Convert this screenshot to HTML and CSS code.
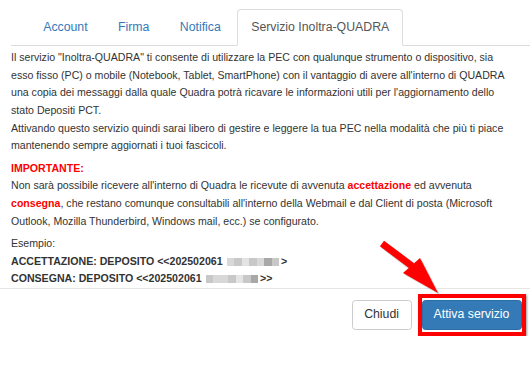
FILE: index.html
```html
<!DOCTYPE html>
<html lang="it">
<head>
<meta charset="UTF-8">
<title>Servizio Inoltra-QUADRA</title>
<link rel="stylesheet" href="styles.css">
</head>
<body>
  <ul class="tabs">
    <li><a href="#">Account</a></li>
    <li><a href="#">Firma</a></li>
    <li><a href="#">Notifica</a></li>
    <li class="active"><a href="#">Servizio Inoltra-QUADRA</a></li>
  </ul>

  <div class="tab-body">
    <p>Il servizio "Inoltra-QUADRA" ti consente di utilizzare la PEC con qualunque strumento o dispositivo, sia<br>
    esso fisso (PC) o mobile (Notebook, Tablet, SmartPhone) con il vantaggio di avere all'interno di QUADRA<br>
    una copia dei messaggi dalla quale Quadra potrà ricavare le informazioni utili per l'aggiornamento dello<br>
    stato Depositi PCT.<br>
    Attivando questo servizio quindi sarai libero di gestire e leggere la tua PEC nella modalità che più ti piace<br>
    mantenendo sempre aggiornati i tuoi fascicoli.</p>

    <p><span class="red">IMPORTANTE:</span><br>
    Non sarà possibile ricevere all'interno di Quadra le ricevute di avvenuta <span class="red">accettazione</span> ed avvenuta<br>
    <span class="red">consegna</span>, che restano comunque consultabili all'interno della Webmail e dal Client di posta (Microsoft<br>
    Outlook, Mozilla Thunderbird, Windows mail, ecc.) se configurato.</p>

    <p class="example">Esempio:<br>
    <b>ACCETTAZIONE: DEPOSITO &lt;&lt;202502061</b><span class="blur"><i class="b2"></i><i class="b1"></i><i class="b3"></i><i class="b1"></i><i class="b2"></i><i class="b4"></i><i class="b1"></i></span><b>&gt;</b><br>
    <b>CONSEGNA: DEPOSITO &lt;&lt;202502061</b><span class="blur"><i class="b1"></i><i class="b2"></i><i class="b2"></i><i class="b1"></i><i class="b3"></i><i class="b1"></i><i class="b4"></i></span><b>&gt;&gt;</b></p>
  </div>

  <div class="footer">
    <button class="btn">Chiudi</button>
    <span class="highlight"><button class="btn btn-primary">Attiva servizio</button></span>
  </div>

  <!-- red pointer arrow drawn over the page -->
  <svg class="arrow" width="80" height="70" viewBox="370 230 80 70">
    <g fill="#888" stroke="#888" opacity="0.35">
      <line x1="383" y1="245" x2="413" y2="268" stroke-width="7"/>
      <polygon points="405,275 422,260 440,295" stroke="none"/>
    </g>
    <g fill="#f00" stroke="#f00">
      <line x1="382" y1="243.5" x2="412" y2="266" stroke-width="7"/>
      <polygon points="403,273 420,258 438,293" stroke="none"/>
    </g>
  </svg>
</body>
</html>
```

FILE: styles.css
```css
body {
  margin: 0;
  font-family: "Liberation Sans", Arial, sans-serif;
  font-size: 12.3px;
  line-height: 17.6px;
  color: #333;
  background: #fff;
}

.tabs {
  display: flex;
  gap: 2px;
  list-style: none;
  margin: 9px 0 0 11px;
  padding: 0 0 0 18px;
  border-bottom: 1px solid #ddd;
}

.tabs li {
  margin-bottom: -1px;
}

.tabs a {
  display: block;
  padding: 8.5px 13.2px 9.1px;
  border: 1px solid transparent;
  border-radius: 4px 4px 0 0;
  color: #337ab7;
  text-decoration: none;
}

.tabs .active a {
  color: #555;
  border-color: #ddd #ddd transparent;
  background: #fff;
}

.tab-body {
  padding: 3px 0 0 11px;
  font-size: 10.6px;
  white-space: nowrap;
}

.tab-body p {
  margin: 0 0 5px;
}

.tab-body .example {
  margin-bottom: 0;
}

.red {
  color: #f00;
  font-weight: bold;
}

.tab-body b {
  font-weight: bold;
}

.blur {
  display: inline-flex;
  vertical-align: -1px;
  height: 8px;
  margin: 0 2px 0 4px;
}

.blur i {
  width: 7.5px;
  height: 8px;
}

.b1 { background: #c8c8c8; }
.b2 { background: #d8d8d8; }
.b3 { background: #e4e4e4; }
.b4 { background: #a8a8a8; }

.footer {
  display: flex;
  justify-content: flex-end;
  align-items: center;
  gap: 6px;
  padding: 5px 4px 0 0;
  border-top: 1px solid #e5e5e5;
}

.btn {
  font-family: inherit;
  font-size: 12.3px;
  line-height: 17.6px;
  height: 30px;
  padding: 0 11.5px;
  border: 1px solid #ccc;
  border-radius: 3.5px;
  background: #fff;
  color: #333;
}

.highlight {
  display: flex;
  padding: 2px 0.5px 2px 0;
  border: 4px solid #f00;
  box-shadow: 1px 1px 2px rgba(0, 0, 0, 0.4);
}

.btn-primary {
  width: 100px;
  padding: 0;
  background: #337ab7;
  border-color: #2e6da4;
  color: #fff;
}

.arrow {
  position: absolute;
  left: 370px;
  top: 230px;
}
```
